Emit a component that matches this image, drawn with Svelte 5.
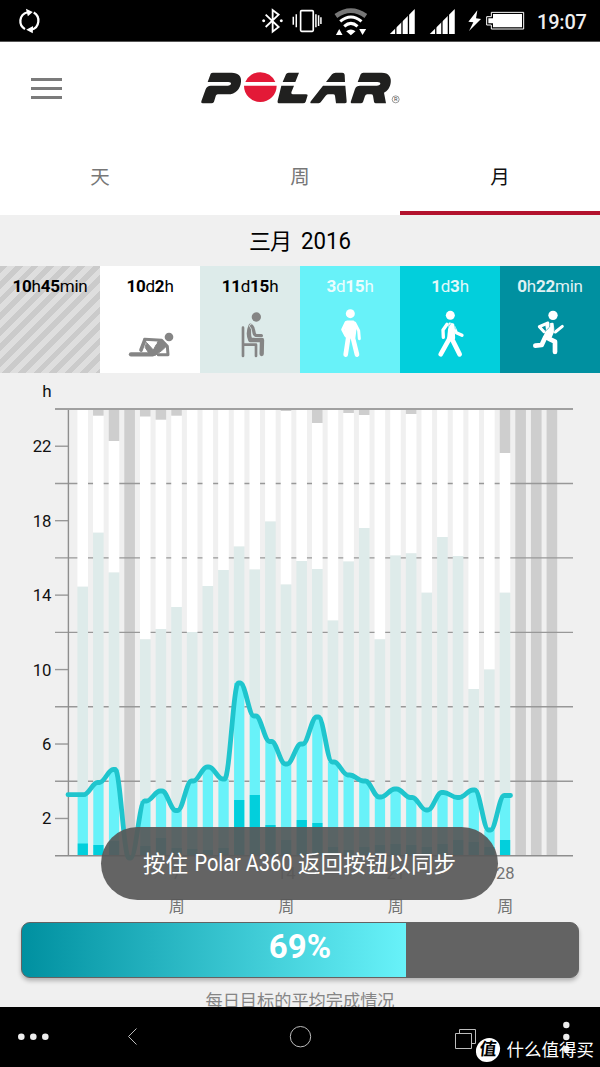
<script lang="ts">
  interface Activity {
    kind: string;
    parts: [string, string][];
  }

  const activities: Activity[] = [
    { kind: 'none', parts: [['10', 'h'], ['45', 'min']] },
    { kind: 'lying', parts: [['10', 'd'], ['2', 'h']] },
    { kind: 'sitting', parts: [['11', 'd'], ['15', 'h']] },
    { kind: 'standing', parts: [['3', 'd'], ['15', 'h']] },
    { kind: 'walking', parts: [['1', 'd'], ['3', 'h']] },
    { kind: 'running', parts: [['0', 'h'], ['22', 'min']] },
  ];

  const tabs = ['天', '周', '月'];
  let active = $state(2);

  // chart geometry; y values below are in chart pixels
  const top = 36;
  const base = 482.7;
  const pitch = 15.64;
  const hour = (base - top) / 24;
  const barX = (day: number) => 77.7 + pitch * (day - 1);
  const y = (h: number) => base - h * hour;

  // per day: [unworn bottom, sitting top, activity level, walking top]
  const days: [number, number, number, number][] = [
    [36, 213.7, 421.7, 470.5],
    [42.7, 159.7, 409.5, 472],
    [68, 199.5, 396.5, 468],
    [0, 0, 485, 0],
    [43.5, 266.3, 428, 473],
    [46.7, 256, 418, 465],
    [42.7, 234, 437.5, 475],
    [36, 259, 408, 476],
    [36, 213, 394, 477],
    [36, 197, 406, 475],
    [36, 173.5, 310, 427],
    [36, 196.5, 343, 422],
    [36, 148.5, 368.5, 452],
    [38, 211.5, 391, 467],
    [36, 188, 371, 447],
    [50, 196, 344, 450],
    [36, 247.5, 389, 474],
    [40, 188.5, 402, 477],
    [42, 155, 408, 474],
    [36, 266.3, 424, 472],
    [36, 182.5, 416, 471],
    [41, 180.3, 424.5, 472],
    [36, 219.7, 437, 474],
    [36, 164, 419.5, 471],
    [36, 183, 424.5, 467],
    [36, 316, 417, 469],
    [36, 296.5, 457, 474],
    [80, 219.7, 422.5, 467],
  ];

  const ticks = [22, 18, 14, 10, 6, 2];
  const lines = [20, 16, 12, 8, 4];
  const weeks = [7, 14, 21, 28];

  // flat shoulder around each day, steep straight run between days
  function trend() {
    let d = 'M68 421.7';
    let px = 68;
    let py = 421.7;
    days.forEach((day, i) => {
      const x = barX(i + 1) + 5.2;
      d += ` H${px + 1} C${px + 6} ${py} ${x - 6} ${day[2]} ${x - 1} ${day[2]} H${x}`;
      px = x;
      py = day[2];
    });
    return d + ' H510.5';
  }
</script>

<div class="screen">
  <header class="status">
    <svg class="sync" viewBox="55 24 70 80" width="23" height="26">
      <g fill="none" stroke="#fff" stroke-width="7">
        <path d="M76 89 C56 77 56 45 84 37" />
        <path d="M103 38 C125 51 121 84 96 91" />
      </g>
      <path d="M79 26 L100 36 L85 49 Z M101 79 L80 91 L100 102 Z" fill="#fff" />
    </svg>
    <svg class="tray" viewBox="780 15 700 95" width="233" height="31.7">
      <g fill="none" stroke="#fff" stroke-width="5.5">
        <path d="M797 44 L836 81 L818 95 V30 L836 44 L797 81" />
      </g>
      <circle cx="791" cy="62" r="4.5" fill="#fff" />
      <circle cx="844" cy="62" r="4.5" fill="#fff" />
      <rect x="902" y="32" width="38" height="62" rx="3" fill="none" stroke="#fff" stroke-width="5" />
      <path d="M889 43 V82 M880 50 V74 M948 43 V82 M956 46 V78 M963 52 V72" stroke="#fff" stroke-width="4.5" />
      <g fill="none" stroke-width="9">
        <path d="M1008 48 Q1053 16 1098 48" stroke="#777" stroke-width="14" />
        <path d="M1021 64 Q1053 38 1085 64" stroke="#fff" />
        <path d="M1033 79 Q1053 61 1073 79" stroke="#fff" />
      </g>
      <path d="M1053 106 L1039 94 Q1053 83 1067 94 Z M1008 105 L1018 87 L1028 105 Z M1078 87 H1099 L1088 105 Z" fill="#fff" />
      {#each [1170, 1290] as x}
        <path d="M{x} 102 L{x + 75} 27 V102 Z" fill="#fff" />
        <path d="M{x + 18} 80 V102 M{x + 36.5} 60 V102 M{x + 56} 40 V102" stroke="#000" stroke-width="4" />
      {/each}
      <path d="M1433 31 L1406 65 L1421 67 L1408 93 L1444 57 L1429 55 Z" fill="#fff" />
    </svg>
    <svg class="battery" viewBox="555 30 120 62" width="40" height="20.7">
      <path d="M574 37 H671 V87 H574 V75 H560 V50 H574 Z" fill="none" stroke="#fff" stroke-width="3" />
      <path d="M579 42 H666 V82 H579 V70 H565 V55 H579 Z" fill="#fff" />
    </svg>
    <span class="clock">19:07</span>
  </header>

  <div class="appbar">
    <button class="menu" aria-label="Menu"><i></i><i></i><i></i></button>
    <svg class="logo" viewBox="30 30 600 110" width="200" height="36.7">
      <g fill="#20201f">
        <path d="M62 41 Q64 38 69 38 H125 C145 38 155 49 153 65 C151 87 137 103 114 103 H84 C79 103 78 106 77 109 L72 125 Q70 130 64 130 H38 Q32 130 34 124 L47 88 Q51 77 62 77 H113 C125 77 127 66 115 66 H53 Z" />
        <path d="M288 43 Q290 38 296 38 H327 L316 66 H278 Z M274 77 H312 L304 97 Q303 103 308 103 H348 Q355 103 352 109 L347 125 Q345 130 339 130 H269 Q261 130 263 122 Z" />
        <path d="M426 43 Q430 38 437 38 H457 Q463 38 464 44 L465 66 H408 Z M399 77 H466 L470 124 Q471 130 465 130 H438 L435 107 Q434 103 429 103 H416 Q411 103 407 107 L392 127 Q389 130 385 130 H365 Q358 130 363 123 Z" />
        <path d="M512 43 Q514 38 520 38 H575 C597 38 605 53 602 69 C599 85 592 93 582 98 L588 130 H558 Q553 130 552 125 L549 107 Q548 103 543 103 H532 Q527 103 525 108 L519 126 Q517 130 512 130 H487 Q480 130 483 123 L495 87 Q499 77 510 77 H560 C574 77 575 66 562 66 H503 Z" />
      </g>
      <path d="M166 66 A49 49 0 0 1 256 66 Z M162 77 H260 A49 49 0 1 1 162 77 Z" fill="#e31937" />
      <circle cx="617" cy="118" r="10.5" fill="none" stroke="#555" stroke-width="1.8" />
      <text x="617" y="124" font-size="17" text-anchor="middle" fill="#444">R</text>
    </svg>
  </div>

  <nav class="tabs">
    {#each tabs as tab, i}
      <button class="tab" class:active={active === i} onclick={() => (active = i)}>{tab}</button>
    {/each}
  </nav>

  <div class="period">
    <svg width="120" height="40">
      <text x="9" y="28" font-size="22" textLength="43">三月</text>
      <text x="61" y="27.5" font-size="24.5" textLength="50" lengthAdjust="spacingAndGlyphs">2016</text>
    </svg>
  </div>

  <section class="activities">
    {#each activities as item}
      <div class="activity {item.kind}">
        <div class="amount">
          {#each item.parts as [num, unit]}<b>{num}</b>{unit}{/each}
        </div>
        <svg viewBox="0 140 300 180" width="100" height="60">
          <g fill="currentColor" stroke="currentColor" stroke-linecap="round" stroke-linejoin="round">
            {#if item.kind === 'lying'}
              <circle cx="207" cy="230" r="13" stroke="none" />
              <path d="M93 282 H158" fill="none" stroke-width="13" />
              <path d="M123 269 L134 240" fill="none" stroke-width="11" />
              <path d="M134 237 L185 240 L202 258 L204 283 H175" fill="none" stroke-width="9" />
              <path d="M140 247 L160 269 L174 243 L190 243 L199 258 L186 270 L166 285 L150 284 L136 262 Z" stroke-width="3" />
              <path d="M150 248 L170 248 L160 259 Z" fill="#fff" stroke="#fff" stroke-width="2" />
            {:else if item.kind === 'sitting'}
              <circle cx="169" cy="170" r="14" stroke="none" />
              <path d="M129 202 V287 M129 253 H168 V287" fill="none" stroke-width="8" />
              <path d="M152 196 C144 214 146 228 151 239 H186 L185 281" fill="none" stroke-width="13" />
              <path d="M155 197 C165 206 158 221 167 225 L184 226" fill="none" stroke="#ddebea" stroke-width="14" />
              <path d="M155 197 C165 206 158 221 167 225 L184 226" fill="none" stroke-width="10" />
            {:else if item.kind === 'standing'}
              <circle cx="151" cy="160" r="13.5" stroke="none" />
              <path d="M141 184 H160 L167 198 L163 230 H140 L135 202 Z" stroke-width="7" />
              <path d="M138 187 L128 208 L137 225 M164 188 L176 211 L178 235" fill="none" stroke-width="9" />
              <path d="M145 230 L137 283 M158 230 L171 283" fill="none" stroke-width="14" />
            {:else if item.kind === 'walking'}
              <circle cx="151" cy="165" r="13.5" stroke="none" />
              <path d="M141 192 L129 209 L130 231 M162 201 L169 217 L186 225" fill="none" stroke-width="10" />
              <path d="M149 190 L160 193 L162 233 H145 Z" stroke-width="7" />
              <path d="M150 232 L122 282 M155 234 L179 282" fill="none" stroke-width="14" />
              <path d="M152 190 Q138 206 139 232 M163 190 L166 206" fill="none" stroke="#02cfdc" stroke-width="1.6" />
            {:else if item.kind === 'running'}
              <circle cx="159" cy="165" r="14" stroke="none" />
              <path d="M144 188 L118 199 L132 214 M166 215 L187 198" fill="none" stroke-width="9" />
              <path d="M140 194 L157 191 L160 210 L151 231 L134 230 L142 208 Z" stroke-width="8" />
              <path d="M135 232 L125 254 L106 256 M146 235 L165 244 V275" fill="none" stroke-width="14" />
              <path d="M137 212 L149 200 V187 M163 192 V212" fill="none" stroke="#0090a0" stroke-width="1.8" />
            {/if}
          </g>
        </svg>
      </div>
    {/each}
  </section>

  <svg class="chart" width="600" height="549" viewBox="0 0 600 549">
    {#each Array(31) as _, i}
      {#if !days[i] || !days[i][1]}
        <rect x={barX(i + 1) - 0.3} y={top} width="10.6" height={base - top} fill="#cecece" />
      {/if}
    {/each}

    <g stroke="#989898" stroke-width="1.4">
      {#each lines as h}
        <line x1="55" x2="573" y1={y(h)} y2={y(h)} />
      {/each}
      {#each ticks as h}
        <line x1="55" x2="68" y1={y(h)} y2={y(h)} />
      {/each}
    </g>

    {#each days as [unworn, sit, level, walk], i}
      {#if sit}
        <g>
          <rect x={barX(i + 1) - 0.3} y={top} width="10.6" height={sit - top} fill="#fff" />
          <rect x={barX(i + 1) - 0.3} y={top} width="10.6" height={unworn - top} fill="#cecece" />
          <rect x={barX(i + 1) - 0.3} y={sit} width="10.6" height={base - sit} fill="#deebea" />
          <rect x={barX(i + 1)} y={level} width="10.2" height={base - level} fill="#68f2f9" />
          <rect x={barX(i + 1)} y={walk} width="10.2" height={base - walk} fill="#02cfdc" />
        </g>
      {/if}
    {/each}

    <g fill="none" stroke="#8e8e8e" stroke-width="1.4">
      <path d="M55 {base} H573" />
      <path d="M68.4 {top} V{base}" />
      <path d="M55 {top} H573" stroke="#a0a0a0" stroke-width="2" />
    </g>

    <path d={trend()} fill="none" stroke="#1fc5cd" stroke-width="4.8" stroke-linecap="round" stroke-linejoin="round" />

    <g font-size="17" fill="#111">
      <text x="51.5" y="24" text-anchor="end">h</text>
      {#each ticks as h}
        <text x="51.5" y={y(h) + 6} text-anchor="end" textLength={h > 9 ? 18.8 : 9.4} lengthAdjust="spacingAndGlyphs">{h}</text>
      {/each}
    </g>
    <g font-size="16.5" fill="#737373" text-anchor="middle">
      {#each weeks as d}
        <text x={barX(d) + 5.2} y="506">{d}</text>
        <text x={barX(d) + 5.2} y="538.5" font-size="16">周</text>
      {/each}
    </g>
  </svg>

  <section class="goal">
    <div class="progress">
      <div class="fill" style="width: 69%"></div>
      <span class="percent">69%</span>
    </div>
    <p>每日目标的平均完成情况</p>
  </section>

  <div class="toast">
    <svg width="316" height="34" fill="#fff">
      <text x="1" y="24.5" font-size="22.5" textLength="45">按住</text>
      <text x="52.5" y="24" font-size="23" textLength="98" lengthAdjust="spacingAndGlyphs">Polar A360</text>
      <text x="156" y="24.5" font-size="22.5" textLength="158">返回按钮以同步</text>
    </svg>
  </div>

  <footer class="softkeys">
    <svg width="600" height="60" viewBox="0 0 600 60">
      <g fill="#eee">
        <circle cx="21.3" cy="29.7" r="3.3" />
        <circle cx="33.3" cy="29.7" r="3.3" />
        <circle cx="45.3" cy="29.7" r="3.3" />
        <circle cx="566.3" cy="18" r="3.2" />
        <circle cx="566.3" cy="30" r="3.2" />
        <circle cx="566.3" cy="42" r="3.2" />
      </g>
      <g fill="none" stroke="#bdbdbd" stroke-width="1">
        <path d="M136.5 21.5 L128.5 29.5 L136.5 37.5" />
        <circle cx="300.5" cy="29.7" r="10.2" />
        <path d="M455.5 26.5 H471.5 V41.5 H455.5 Z M459.5 26.5 V22.5 H475.5 V36.5 H471.5" />
      </g>
    </svg>
    <div class="watermark">
      <span class="badge">值</span>
      <span>什么值得买</span>
    </div>
  </footer>
</div>

<style>
  :global(body) {
    background: #f0f0f0;
  }

  .screen {
    position: relative;
    width: 600px;
    height: 1067px;
    display: flex;
    flex-direction: column;
    overflow: hidden;
    background: #f0f0f0;
    color: #000;
    font-family: Roboto, 'Noto Sans CJK SC', sans-serif;
  }

  svg {
    display: block;
    flex-shrink: 0;
  }

  button {
    padding: 0;
    border: 0;
    background: none;
    font: inherit;
    cursor: pointer;
  }

  .status {
    height: 42px;
    box-sizing: border-box;
    display: flex;
    align-items: center;
    padding: 0 13px 0 18px;
    background: #000;
    border-bottom: 1px solid #555;
    color: #eee;
  }

  .tray {
    margin-left: auto;
  }

  .battery {
    margin: 0 12px 0 -8px;
  }

  .clock {
    width: 50px;
    font-size: 20px;
    font-weight: 500;
    line-height: 20px;
    letter-spacing: -0.2px;
    padding-top: 3px;
  }

  .appbar {
    position: relative;
    height: 93px;
    display: flex;
    align-items: center;
    background: #fff;
  }

  .menu {
    width: 31px;
    display: flex;
    flex-direction: column;
    gap: 6px;
    margin-left: 31px;
  }

  .menu i {
    height: 3px;
    background: #7b7b7b;
  }

  .logo {
    margin-left: 138px;
  }

  .tabs {
    height: 80px;
    display: flex;
    background: #fff;
  }

  .tab {
    flex: 1;
    box-sizing: border-box;
    padding-top: 4px;
    border-bottom: 4px solid transparent;
    font-size: 19.5px;
    color: #777;
  }

  .tab.active {
    border-color: #b3122e;
    color: #111;
  }

  .period {
    height: 51px;
    display: flex;
    justify-content: center;
    align-items: center;
  }

  .activities {
    height: 107px;
    display: flex;
    flex-shrink: 0;
  }

  .activity {
    flex: 1;
    display: flex;
    flex-direction: column;
    color: #858585;
  }

  .amount {
    height: 40.7px;
    padding-top: 10px;
    box-sizing: border-box;
    text-align: center;
    white-space: nowrap;
    font-size: 17px;
    letter-spacing: -0.25px;
    line-height: 20px;
    color: #000;
  }

  .none {
    background: repeating-linear-gradient(135deg, #cbcbcb 0 5.5px, #dedede 5.5px 11px);
  }

  .lying {
    background: #fff;
  }

  .sitting {
    background: #ddebea;
  }

  .standing {
    background: #68f2f9;
  }

  .walking {
    background: #02cfdc;
  }

  .running {
    background: #0090a0;
  }

  .standing,
  .walking,
  .running,
  .standing .amount,
  .walking .amount,
  .running .amount {
    color: #fff;
  }

  .standing .amount,
  .walking .amount,
  .running .amount {
    opacity: 0.88;
  }

  .goal {
    height: 85px;
    overflow: hidden;
  }

  .progress {
    position: relative;
    height: 56px;
    box-sizing: border-box;
    margin: 0 21px;
    border: 1px solid #636363;
    border-radius: 9px;
    overflow: hidden;
    background: #636363;
    box-shadow: 0 3px 4px rgba(0, 0, 0, 0.25);
  }

  .fill {
    height: 100%;
    background: linear-gradient(90deg, #0090a0, #68f2f9);
  }

  .percent {
    position: absolute;
    inset: 0;
    text-align: center;
    font-size: 33px;
    font-weight: 700;
    line-height: 48px;
    color: #fff;
  }

  .goal p {
    margin: 11px 0 0;
    text-align: center;
    font-size: 17.2px;
    line-height: 24px;
    color: #858585;
  }

  .toast {
    position: absolute;
    left: 101px;
    top: 827px;
    width: 397px;
    height: 73px;
    display: flex;
    align-items: center;
    justify-content: center;
    border-radius: 37px;
    background: rgba(88, 88, 88, 0.92);
  }

  .softkeys {
    position: relative;
    height: 60px;
    background: #000;
  }

  .watermark {
    position: absolute;
    right: 6px;
    bottom: 5px;
    display: flex;
    align-items: center;
    gap: 7px;
    font-size: 17.5px;
    line-height: 24px;
    color: #fff;
  }

  .badge {
    width: 24px;
    height: 24px;
    border-radius: 50%;
    background: #fff;
    color: #000;
    text-align: center;
    font-weight: 700;
    font-size: 17px;
    line-height: 23px;
    transform: skewX(-6deg);
  }
</style>
